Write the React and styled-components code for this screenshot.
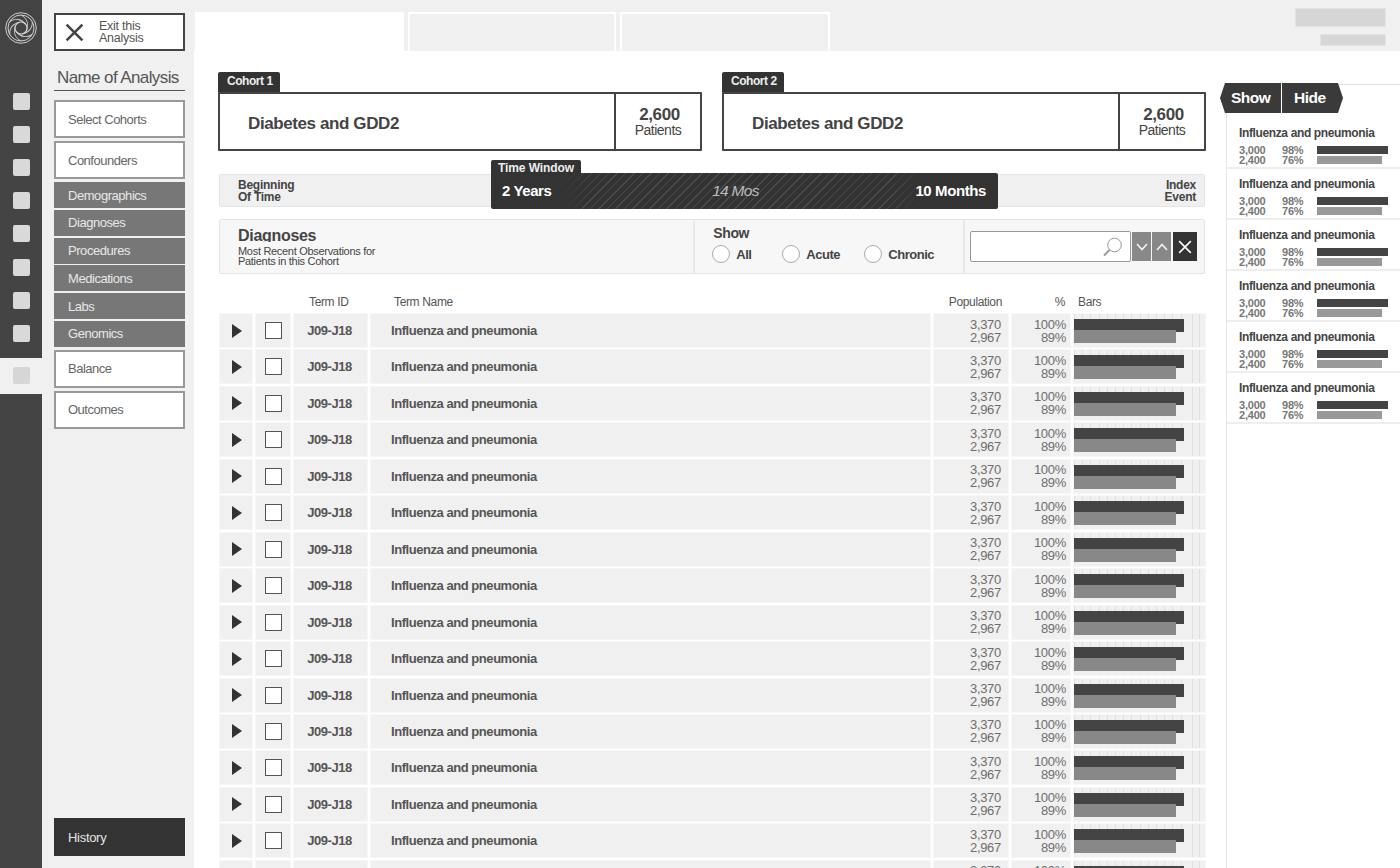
import React from "react";
import styled, { createGlobalStyle } from "styled-components";

const Global = createGlobalStyle`
  html, body { margin: 0; padding: 0; background: #fff; }
  body { font-family: "Liberation Sans", Arial, sans-serif; color: #444; overflow: hidden; }
  * { box-sizing: border-box; }
`;
const Page = styled.div`
  display: grid; grid-template-columns: 42px 152px 1fr; width: 1400px; height: 868px; overflow: hidden;
`;
const Rail = styled.nav`
  background: #444; display: flex; flex-direction: column; align-items: stretch; height: 100%;
`;
const LogoSlot = styled.div`
  height: 84.6px; padding: 12px 0 0 5px; flex: none;
`;
const RailItem = styled.div`
  height: ${p => (p.$active ? 36 : 33.2)}px;
  margin-top: ${p => (p.$active ? 7.8 : 0)}px;
  display: flex; align-items: center; justify-content: center; flex: none;
  background: ${p => (p.$active ? "#f0f0f0" : "transparent")};
`;
const RailSquare = styled.span`
  width: 17px; height: 17px; border-radius: 2px; background: ${p => (p.$active ? "#d6d6d6" : "#d9d9d9")};
`;
const Side = styled.aside`
  background: #f0f0f0; display: flex; flex-direction: column; padding: 13px 9px 12px 12px;
`;
const ExitButton = styled.button`
  display: flex; align-items: center; height: 38px; background: #fff; border: 2px solid #444; padding: 0 0 0 9px;
  font: 12.5px/12px "Liberation Sans", sans-serif; color: #555; text-align: left; letter-spacing: -0.25px;
  gap: 15px; width: 100%;
`;
const AnalysisName = styled.div`
  margin-top: 16px; font-size: 17px; line-height: 20px; color: #555; padding: 1px 0 2px 3px; border-bottom: 1px solid #555;
  letter-spacing: -0.6px; white-space: nowrap;
`;
const NavBox = styled.div`
  height: 38px; margin-top: ${p => p.$mt}px; background: #fff; border: 2px solid #999; padding-left: 12px;
  display: flex; align-items: center; font-size: 13px; color: #666; letter-spacing: -0.5px;
`;
const NavSub = styled.div`
  height: 26px; margin-top: ${p => p.$first ? 3 : 1.8}px; background: #777; padding-left: 14px; display: flex; align-items: center;
  font-size: 13px; color: #e8e8e8; letter-spacing: -0.45px;
`;
const HistoryButton = styled.div`
  margin-top: auto; height: 38px; background: #333; color: #e4e4e4; font-size: 13px; padding-left: 14px;
  display: flex; align-items: center; letter-spacing: -0.3px;
`;
const Workspace = styled.div`
  display: flex; flex-direction: column; min-width: 0; height: 868px;
`;
const TopBar = styled.header`
  height: 51px; flex: none; background: #f0f0f0; display: flex; align-items: flex-end; padding: 0 15px 0 1px;
`;
const Tab = styled.div`
  height: 39px; width: ${p => p.$w}px; margin-right: 4px;
  background: ${p => (p.$active ? "#fff" : "#f0f0f0")};
  border: ${p => (p.$active ? "none" : "2px solid #fff")}; border-bottom: none;
`;
const TopMeta = styled.div`
  margin-left: auto; align-self: flex-start; display: flex; flex-direction: column; align-items: flex-end; padding-top: 9px; gap: 9px;
`;
const Placeholder = styled.div`
  width: ${p => p.$w}px; height: ${p => p.$h}px; background: #d6d6d6; outline: 1px solid #e4e4e4;
`;
const Body = styled.div`
  flex: 1; display: flex; min-height: 0; background: #fff;
`;
const Center = styled.main`
  width: 1032px; flex: none; padding: 21px 20px 0 24px; overflow: hidden;
`;
const CohortRow = styled.div`
  display: flex; gap: 20px;
`;
const Cohort = styled.section`
  width: 484px;
`;
const CohortTab = styled.div`
  width: 62px; height: 20px; padding-left: 9px; background: #333; color: #eee; font-size: 12px; font-weight: 700;
  line-height: 19px; border-radius: 2px 2px 0 0; letter-spacing: -0.45px; white-space: nowrap;
`;
const CohortBox = styled.div`
  height: 59px; border: 2px solid #444; display: flex; align-items: stretch; border-radius: 1px;
`;
const CohortName = styled.div`
  flex: 1; padding: 4px 0 0 28px; display: flex; align-items: center; font-size: 17px; font-weight: 700; color: #444; letter-spacing: -0.4px;
`;
const PatientCount = styled.div`
  width: 86px; border-left: 2px solid #444; display: flex; flex-direction: column; align-items: center; justify-content: center;
  font-size: 14px; line-height: 14px; color: #444; letter-spacing: -0.5px;
  strong { font-size: 17px; line-height: 17px; letter-spacing: -0.4px; margin-left: 3px; }
`;
const TimeBar = styled.section`
  position: relative; margin: 23px 1px 0; height: 33px; background: #f0f0f0; border: 1px solid #e4e4e4; border-radius: 2px;
  display: flex; align-items: center; justify-content: space-between; padding: 0 8px 0 18px;
  font-size: 12px; line-height: 12px; font-weight: 700; color: #444; letter-spacing: -0.25px;
`;
const IndexLabel = styled.div`
  text-align: right;
`;
const TimeWindow = styled.div`
  position: absolute; left: 271px; top: -2px; width: 507px; height: 36px; background: #333; border-radius: 0 2px 2px 2px;
  color: #fff; display: flex; align-items: center; justify-content: space-between; padding: 0 12px 0 11px;
  font-size: 15px; font-weight: 700; letter-spacing: -0.4px;
`;
const TimeWindowTab = styled.div`
  position: absolute; left: 0; top: -13px; height: 14px; width: 90px; background: #333; border-radius: 2px 2px 0 0; color: #eee;
  font-size: 12px; line-height: 16px; padding-left: 7px; letter-spacing: -0.1px;
`;
const Hatch = styled.div`
  position: absolute; left: 68px; right: 78px; top: 0; bottom: 0;
  background: repeating-linear-gradient(135deg, transparent 0 5px, #4b4b4b 5px 6px);
  -webkit-mask-image: linear-gradient(90deg, transparent, #000 8%, #000 92%, transparent);
`;
const Middle = styled.span`
  position: relative; font-size: 15.5px; font-weight: 400; font-style: italic; color: #bbb; letter-spacing: -0.7px; margin-left: 4px;
`;
const TimeEnd = styled.span`
  position: relative;
`;
const FilterPanel = styled.section`
  margin: 12px 1px 0; height: 55px; background: #f7f7f7; border: 1px solid #e4e4e4; border-radius: 2px; display: flex;
`;
const FilterTitle = styled.div`
  width: 476px; padding: 8px 0 0 18px; border-right: 2px solid #e8e8e8; font-size: 11px; line-height: 10px; color: #444; letter-spacing: -0.3px; overflow: hidden;
  h2 { margin: 0 0 4px; font-size: 16px; line-height: 15px; font-weight: 700; height: 14px; overflow: hidden; letter-spacing: -0.3px; }
`;
const FilterShow = styled.div`
  width: 270px; border-right: 2px solid #e8e8e8; padding: 6px 0 0 17px; color: #444;
`;
const ShowLabel = styled.div`
  font-size: 14px; line-height: 14px; font-weight: 700; color: #444; letter-spacing: -0.4px; margin: 0 0 5px 1px;
`;
const RadioRow = styled.div`
  display: flex; gap: 0;
`;
const RadioOption = styled.label`
  display: flex; align-items: center; width: ${p => p.$w}px; gap: 6px; font-size: 13px; font-weight: 700; color: #444; letter-spacing: -0.5px;
`;
const RadioDot = styled.span`
  width: 18px; height: 18px; border-radius: 50%; border: 1px solid #aaa; background: #fff; flex: none;
`;
const FilterSearch = styled.div`
  flex: 1; display: flex; align-items: center; padding: 0 7px 0 5px; gap: 1px;
`;
const SearchField = styled.div`
  width: 161px; height: 31px; border: 1.5px solid #999; border-radius: 2px; background: #fff; display: flex; align-items: center; justify-content: flex-end; padding-right: 6px; flex: none;
`;
const SquareButton = styled.button`
  width: ${p => p.$w}px; height: 29px; border: none; padding: 0; background: ${p => p.$bg}; display: flex; align-items: center; justify-content: center; flex: none;
  margin-left: ${p => p.$ml || 0}px;
`;
const TableHead = styled.div`
  display: grid; grid-template-columns: 32px 34px 73px 559px 74px 58px 131px; column-gap: 4px; margin: 21px 0 0 2px; height: 19px;
  font-size: 12px; line-height: 15px; color: #555; letter-spacing: -0.35px;
`;
const HeadCell = styled.div`
  grid-column: ${p => p.$col}; text-align: ${p => p.$right ? "right" : "left"}; padding: ${p => p.$pad || "0"};
`;
const Rows = styled.div`
  display: flex; flex-direction: column; margin-left: 2px; gap: 3.46px;
`;
const Row = styled.div`
  display: grid; grid-template-columns: 32px 34px 73px 559px 74px 58px 131px; column-gap: 4px; height: 33px; flex: none;
`;
const Cell = styled.div`
  background: #f0f0f0; outline: 1px solid #f6f6f6; display: flex; align-items: center;
  justify-content: ${p => p.$justify || "flex-start"}; padding: ${p => p.$pad || "0"};
  font-size: 13px; color: #555; font-weight: ${p => p.$bold ? 700 : 400}; letter-spacing: -0.45px;
`;
const Check = styled.span`
  width: 17px; height: 17px; border: 1px solid #555; background: #fff;
`;
const NumberCell = styled(Cell)`
  flex-direction: column; align-items: flex-end; justify-content: center; line-height: 13px; font-size: 13px; color: #6e6e6e; padding: 0 ${p => p.$right}px 0 0; letter-spacing: -0.3px;
`;
const BarCell = styled.div`
  background-color: #f0f0f0; outline: 1px solid #f6f6f6;
  background-image:
    linear-gradient(90deg, transparent 118px, #e0e0e0 118px 119px, transparent 119px 125px, #e0e0e0 125px 126px, transparent 126px),
    repeating-linear-gradient(90deg, #e0e0e0 0 1px, transparent 1px 8.2px);
  background-size: 100% 100%, 110px 5px;
  background-repeat: no-repeat;
  display: flex; flex-direction: column; padding-top: 5px;
`;
const TermBar = styled.div`
  height: ${p => p.$h}px; background: ${p => p.$color}; margin-top: ${p => p.$mt || 0}px; flex: none;
`;
const Aside = styled.aside`
  flex: 1; margin-top: 33px; border-left: 1px solid #e4e4e4; border-top: 1px solid #e4e4e4; min-width: 0;
`;
const Switcher = styled.div`
  display: flex; margin: -2px 0 5px -7px; height: 30px; width: 123px; color: #fff; font-size: 15.5px; font-weight: 700; letter-spacing: -0.5px;
`;
const SwitchPart = styled.div`
  height: 30px; background: #3a3a3a; display: flex; align-items: center;
  width: ${p => p.$w}px; padding-left: ${p => p.$pad}px; margin-right: ${p => p.$mr || 0}px;
  clip-path: ${p => p.$clip};
`;
const AsideItem = styled.div`
  height: 51px; padding: 8px 0 0 12px; border-bottom: 2px solid #eee;
`;
const AsideTitle = styled.div`
  font-size: 12px; line-height: 15px; font-weight: 700; color: #444; letter-spacing: -0.37px; white-space: nowrap;
`;
const AsideData = styled.div`
  display: grid; grid-template-columns: 43px 35px 1fr; margin-top: 4px; font-size: 11px; line-height: 10px; font-weight: 700; color: #777;
  align-items: center; width: 150px; letter-spacing: -0.2px;
`;
const AsideBar = styled.div`
  height: 8px; width: ${p => p.$w}px; background: ${p => p.$color};
`;

const Logo = () => (
  <svg width="32" height="32" viewBox="0 0 32 32" fill="none" stroke="#cfcfcf" strokeWidth="1">
    <circle cx="16" cy="16" r="15.3" />
    <circle cx="16" cy="16" r="13" />
    <circle cx="16" cy="16" r="6" strokeWidth="1.2" />
    {[0, 60, 120, 180, 240, 300].map(a => (
      <path key={a} d="M16 3 C22 6 24 12 21.6 18" strokeWidth="0.9" transform={`rotate(${a} 16 16)`} />
    ))}
  </svg>
);
const CloseIcon = ({ size, color, width }) => (
  <svg width={size} height={size} viewBox="0 0 18 18" stroke={color} strokeWidth={width} fill="none">
    <path d="M1.5 1.5 16.5 16.5M16.5 1.5 1.5 16.5" />
  </svg>
);
const Chevron = ({ up }) => (
  <svg width="14" height="10" viewBox="0 0 14 10" stroke="#f2f2f2" strokeWidth="1.6" fill="none">
    <path d={up ? "M2 8 7 2.5 12 8" : "M2 2 7 7.5 12 2"} />
  </svg>
);
const Lens = () => (
  <svg width="22" height="20" viewBox="0 0 22 20" fill="none" stroke="#999">
    <circle cx="12.5" cy="8" r="6.8" strokeWidth="1" />
    <path d="M7.5 13 2 18.5" strokeWidth="2" />
  </svg>
);
const Play = () => (
  <svg width="10" height="14" viewBox="0 0 10 14" fill="#333"><path d="M0 0 10 7 0 14Z" /></svg>
);

const Radio = ({ label, w }) => (
  <RadioOption $w={w}><RadioDot />{label}</RadioOption>
);

const rows = Array.from({ length: 16 }, (_, i) => i);
const asideItems = Array.from({ length: 6 }, (_, i) => i);

export default function App() {
  return (
    <Page>
      <Global />
      <Rail>
        <LogoSlot><Logo /></LogoSlot>
        {[0, 1, 2, 3, 4, 5, 6, 7].map(i => <RailItem key={i}><RailSquare /></RailItem>)}
        <RailItem $active><RailSquare $active /></RailItem>
      </Rail>
      <Side>
        <ExitButton>
          <CloseIcon size={19} color="#444" width={2.4} />
          <span>Exit this<br />Analysis</span>
        </ExitButton>
        <AnalysisName>Name of Analysis</AnalysisName>
        <NavBox $mt={9}>Select Cohorts</NavBox>
        <NavBox $mt={3}>Confounders</NavBox>
        <NavSub $first>Demographics</NavSub>
        <NavSub>Diagnoses</NavSub>
        <NavSub>Procedures</NavSub>
        <NavSub>Medications</NavSub>
        <NavSub>Labs</NavSub>
        <NavSub>Genomics</NavSub>
        <NavBox $mt={3}>Balance</NavBox>
        <NavBox $mt={3}>Outcomes</NavBox>
        <HistoryButton>History</HistoryButton>
      </Side>
      <Workspace>
        <TopBar>
          <Tab $active $w={209} />
          <Tab $w={208} />
          <Tab $w={210} />
          <TopMeta>
            <Placeholder $w={89} $h={17} />
            <Placeholder $w={64} $h={10} />
          </TopMeta>
        </TopBar>
        <Body>
          <Center>
            <CohortRow>
              {["Cohort 1", "Cohort 2"].map(c => (
                <Cohort key={c}>
                  <CohortTab>{c}</CohortTab>
                  <CohortBox>
                    <CohortName>Diabetes and GDD2</CohortName>
                    <PatientCount><strong>2,600</strong>Patients</PatientCount>
                  </CohortBox>
                </Cohort>
              ))}
            </CohortRow>
            <TimeBar>
              <div>Beginning<br />Of Time</div>
              <IndexLabel>Index<br />Event</IndexLabel>
              <TimeWindow>
                <TimeWindowTab>Time Window</TimeWindowTab>
                <Hatch />
                <TimeEnd>2 Years</TimeEnd>
                <Middle>14 Mos</Middle>
                <TimeEnd>10 Months</TimeEnd>
              </TimeWindow>
            </TimeBar>
            <FilterPanel>
              <FilterTitle>
                <h2>Diagnoses</h2>
                Most Recent Observations for<br />Patients in this Cohort
              </FilterTitle>
              <FilterShow>
                <ShowLabel>Show</ShowLabel>
                <RadioRow>
                  <Radio label="All" w={70} />
                  <Radio label="Acute" w={82} />
                  <Radio label="Chronic" w={90} />
                </RadioRow>
              </FilterShow>
              <FilterSearch>
                <SearchField><Lens /></SearchField>
                <SquareButton $w={19} $bg="#888"><Chevron /></SquareButton>
                <SquareButton $w={19} $bg="#888"><Chevron up /></SquareButton>
                <SquareButton $w={24} $bg="#333" $ml={1}><CloseIcon size={14} color="#fff" width={2} /></SquareButton>
              </FilterSearch>
            </FilterPanel>
            <TableHead>
              <HeadCell $col={3} $pad="0 0 0 15px">Term ID</HeadCell>
              <HeadCell $col={4} $pad="0 0 0 23px">Term Name</HeadCell>
              <HeadCell $col={5} $right $pad="0 6px 0 0">Population</HeadCell>
              <HeadCell $col={6} $right $pad="0 5px 0 0">%</HeadCell>
              <HeadCell $col={7} $pad="0 0 0 4px">Bars</HeadCell>
            </TableHead>
            <Rows>
              {rows.map(i => (
                <Row key={i}>
                  <Cell $justify="center" $pad="0 0 0 2px"><Play /></Cell>
                  <Cell $justify="center"><Check /></Cell>
                  <Cell $bold $justify="center" $pad="0 2px 0 0">J09-J18</Cell>
                  <Cell $bold $pad="0 0 0 20px">Influenza and pneumonia</Cell>
                  <NumberCell $right={7}><span>3,370</span><span>2,967</span></NumberCell>
                  <NumberCell $right={4}><span>100%</span><span>89%</span></NumberCell>
                  <BarCell>
                    <TermBar $h={13} $color="#444" style={{ width: 110 }} />
                    <TermBar $h={13} $mt={-2} $color="#888" style={{ width: 102 }} />
                  </BarCell>
                </Row>
              ))}
            </Rows>
          </Center>
          <Aside>
            <Switcher>
              <SwitchPart $w={61} $pad={11} $mr={1} $clip="polygon(5px 0, 100% 0, 100% 100%, 5px 100%, 0 50%)">Show</SwitchPart>
              <SwitchPart $w={61} $pad={12} $clip="polygon(0 0, 56px 0, 100% 50%, 56px 100%, 0 100%)">Hide</SwitchPart>
            </Switcher>
            {asideItems.map(i => (
              <AsideItem key={i}>
                <AsideTitle>Influenza and pneumonia</AsideTitle>
                <AsideData>
                  <span>3,000</span><span>98%</span><AsideBar $w={71} $color="#444" />
                  <span>2,400</span><span>76%</span><AsideBar $w={65} $color="#999" />
                </AsideData>
              </AsideItem>
            ))}
          </Aside>
        </Body>
      </Workspace>
    </Page>
  );
}
